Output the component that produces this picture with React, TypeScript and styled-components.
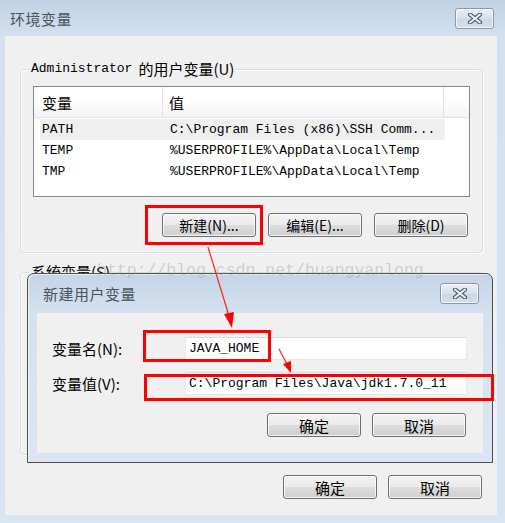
import styled, { createGlobalStyle } from 'styled-components';

const CJK = `"Noto Sans CJK SC", "Noto Sans", sans-serif`;
const MONO = `"Liberation Mono", "Noto Sans CJK SC", monospace`;

const GlobalStyle = createGlobalStyle`
  html, body {
    margin: 0;
    padding: 0;
    background: #d6e3f1;
  }
  body {
    font-family: ${CJK};
  }
`;

const Window = styled.div`
  position: relative;
  width: 505px;
  height: 523px;
  display: flex;
  flex-direction: column;
  background: linear-gradient(#c2d2e4 0, #d2e0ef 36px, #d8e5f3 100%);
  overflow: hidden;
`;

const TitleBar = styled.div<{ $h: number; $pl: number; $pr: number }>`
  height: ${(p) => p.$h}px;
  flex: none;
  display: flex;
  align-items: center;
  justify-content: space-between;
  padding: 0 ${(p) => p.$pr}px 0 ${(p) => p.$pl}px;
  box-sizing: border-box;
`;

const Title = styled.span`
  font: 15px/1 ${CJK};
  color: #4a535e;
  letter-spacing: 0.5px;
`;

const CloseBox = styled.div`
  width: 39px;
  height: 21px;
  box-sizing: border-box;
  border: 1px solid #8c98a8;
  border-radius: 3px;
  background: linear-gradient(#e9eff6, #d6e0eb 50%, #cbd6e3 51%, #d6e0ec);
  box-shadow: inset 0 0 0 1px rgba(255, 255, 255, 0.7);
  display: flex;
  align-items: center;
  justify-content: center;
`;

const Client = styled.div`
  flex: 1;
  margin: 0 8px 8px 5px;
  background: #f0f0f0;
  display: flex;
  flex-direction: column;
  padding: 0 14px 0 15px;
`;

const GroupBox = styled.div<{ $top: number; $h: number }>`
  margin-top: ${(p) => p.$top}px;
  height: ${(p) => p.$h}px;
  box-sizing: border-box;
  border: 1px solid #d5dfe5;
  border-radius: 4px;
  box-shadow: inset 1px 1px 0 #fff, 1px 1px 0 #fff;
  padding: 0 12px;
  display: flex;
  flex-direction: column;
`;

const GroupLabel = styled.div`
  align-self: flex-start;
  height: 18px;
  margin: -10px 0 0 -4px;
  padding: 0 2px;
  background: #f0f0f0;
  display: flex;
  align-items: center;
  gap: 6px;
  font: 15px/18px ${CJK};
  color: #000;
`;

const Mono = styled.span`
  font: 13px/18px ${MONO};
`;

const ListBox = styled.div`
  margin-top: 8px;
  width: 437px;
  height: 111px;
  box-sizing: border-box;
  border: 1px solid #828790;
  background: #fff;
`;

const Header = styled.div`
  height: 30px;
  display: grid;
  grid-template-columns: 129px 281px 1fr;
  background: linear-gradient(#ffffff, #ffffff 45%, #f1f2f4);
  border-bottom: 1px solid #e2e4e7;
`;

const HeaderCell = styled.div<{ $pl: number }>`
  border-right: 1px solid #e1e3e6;
  padding-left: ${(p) => p.$pl}px;
  display: flex;
  align-items: center;
  font: 15px/1 ${CJK};
  color: #000;
  &:last-child {
    border-right: none;
  }
`;

const Rows = styled.div`
  margin-top: 1px;
`;

const Row = styled.div<{ $selected?: boolean }>`
  margin-left: 6px;
  width: 405px;
  height: 21px;
  display: grid;
  grid-template-columns: 130px 1fr;
  align-items: center;
  background: ${(p) => (p.$selected ? '#efefef' : 'transparent')};
  font: 13px/21px ${MONO};
  color: #000;
  & > span:first-child {
    padding-left: 2px;
  }
`;

const ButtonRow = styled.div<{ $top: number; $gap: number; $pr: number }>`
  margin-top: ${(p) => p.$top}px;
  display: flex;
  justify-content: flex-end;
  gap: ${(p) => p.$gap}px;
  padding-right: ${(p) => p.$pr}px;
`;

const Button = styled.button<{ $size?: number }>`
  width: 94px;
  height: 24px;
  box-sizing: border-box;
  padding: 0;
  border: 1px solid #707070;
  border-radius: 3px;
  background: linear-gradient(#f3f3f3 0%, #ebebeb 48%, #dddddd 52%, #cfcfcf 100%);
  box-shadow: inset 0 0 0 1px rgba(255, 255, 255, 0.75);
  font: ${(p) => p.$size ?? 14}px/1 ${CJK};
  color: #000;
`;

const Dialog = styled.div`
  position: absolute;
  left: 27px;
  top: 273px;
  width: 466px;
  height: 190px;
  box-sizing: border-box;
  border: 1px solid #4e4e4e;
  border-radius: 7px 7px 0 0;
  background: linear-gradient(#c5d5e6 0, #d4e1ef 39px, #dae6f3 100%);
  box-shadow: inset 1px 1px 0 rgba(255, 255, 255, 0.6);
  display: flex;
  flex-direction: column;
  z-index: 2;
`;

const DialogClient = styled.div`
  flex: 1;
  margin: 0 9px 9px 9px;
  background: #f0f0f0;
  display: flex;
  flex-direction: column;
  padding: 24px 15px 0 15px;
`;

const Field = styled.div`
  display: flex;
  align-items: center;
  & + & {
    margin-top: 12px;
  }
`;

const FieldLabel = styled.div`
  width: 133px;
  font: 15px/1 ${CJK};
  color: #000;
`;

const Input = styled.div`
  width: 282px;
  height: 23px;
  box-sizing: border-box;
  background: #fff;
  border: 1px solid #e6e8eb;
  border-top-color: #dadde1;
  padding-left: 3px;
  display: flex;
  align-items: center;
  font: 13px/1 ${MONO};
  color: #000;
`;

const Watermark = styled.div`
  position: absolute;
  left: 97px;
  top: 262px;
  font: 16.5px/18px ${MONO};
  color: rgba(150, 150, 150, 0.4);
  z-index: 4;
  pointer-events: none;
`;

const Annotations = styled.svg`
  position: absolute;
  left: 0;
  top: 0;
  z-index: 5;
  pointer-events: none;
`;

function CloseButton() {
  return (
    <CloseBox>
      <svg width="16" height="11" viewBox="0 0 16 11">
        <path d="M3 1.5 L13 9.5 M13 1.5 L3 9.5" stroke="#4f5c6c" strokeWidth="4.2" strokeLinecap="round" />
        <path d="M3 1.5 L13 9.5 M13 1.5 L3 9.5" stroke="#eef2f6" strokeWidth="2" strokeLinecap="round" />
      </svg>
    </CloseBox>
  );
}

const rows = [
  { name: 'PATH', value: 'C:\\Program Files (x86)\\SSH Comm...', selected: true },
  { name: 'TEMP', value: '%USERPROFILE%\\AppData\\Local\\Temp' },
  { name: 'TMP', value: '%USERPROFILE%\\AppData\\Local\\Temp' },
];

export default function App() {
  return (
    <>
      <GlobalStyle />
      <Window>
        <TitleBar $h={36} $pl={10} $pr={11}>
          <Title>环境变量</Title>
          <CloseButton />
        </TitleBar>
        <Client>
          <GroupBox $top={33} $h={184}>
            <GroupLabel>
              <Mono>Administrator</Mono>
              <span>的用户变量(U)</span>
            </GroupLabel>
            <ListBox>
              <Header>
                <HeaderCell $pl={8}>变量</HeaderCell>
                <HeaderCell $pl={6}>值</HeaderCell>
                <HeaderCell $pl={0} />
              </Header>
              <Rows>
                {rows.map((r) => (
                  <Row key={r.name} $selected={r.selected}>
                    <span>{r.name}</span>
                    <span>{r.value}</span>
                  </Row>
                ))}
              </Rows>
            </ListBox>
            <ButtonRow $top={16} $gap={12} $pr={2}>
              <Button>新建(N)...</Button>
              <Button>编辑(E)...</Button>
              <Button>删除(D)</Button>
            </ButtonRow>
          </GroupBox>
          <GroupBox $top={19} $h={183}>
            <GroupLabel>系统变量(S)</GroupLabel>
          </GroupBox>
          <ButtonRow $top={20} $gap={11} $pr={1}>
            <Button $size={15}>确定</Button>
            <Button $size={15}>取消</Button>
          </ButtonRow>
        </Client>

        <Dialog>
          <TitleBar $h={39} $pl={15} $pr={13}>
            <Title>新建用户变量</Title>
            <CloseButton />
          </TitleBar>
          <DialogClient>
            <Field>
              <FieldLabel>变量名(N):</FieldLabel>
              <Input>JAVA_HOME</Input>
            </Field>
            <Field>
              <FieldLabel>变量值(V):</FieldLabel>
              <Input>C:\Program Files\Java\jdk1.7.0_11</Input>
            </Field>
            <ButtonRow $top={18} $gap={11} $pr={2}>
              <Button $size={15}>确定</Button>
              <Button $size={15}>取消</Button>
            </ButtonRow>
          </DialogClient>
        </Dialog>

        <Watermark>http://blog.csdn.net/huangyanlong</Watermark>

        <Annotations width="505" height="523" viewBox="0 0 505 523">
          <g fill="none" stroke="#ff0000" strokeWidth="3">
            <rect x="146.5" y="206.5" width="115" height="37" />
            <rect x="144.5" y="331.5" width="125" height="29" />
            <rect x="145.5" y="375.5" width="347" height="24" />
          </g>
          <g stroke="#ff2020" strokeWidth="1.2">
            <line x1="208" y1="247" x2="229" y2="316" />
            <line x1="279" y1="349" x2="287" y2="364" />
          </g>
          <g fill="#ff0000">
            <polygon points="232,328 224,314 234,312" />
            <polygon points="291,373 283,364 291,361" />
          </g>
        </Annotations>
      </Window>
    </>
  );
}
